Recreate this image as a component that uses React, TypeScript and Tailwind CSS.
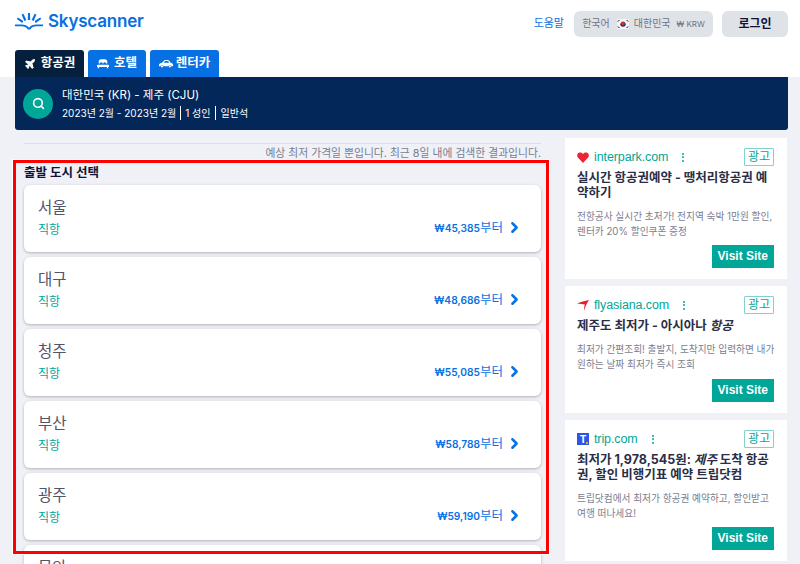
import { ChevronRight, Plane, Search } from "lucide-react";

const font = { fontFamily: '"Inter", "Noto Sans CJK KR", sans-serif' };
const latin = { fontFamily: '"Liberation Sans", "Noto Sans CJK KR", sans-serif' };

/////////////////////////////////////////////////////////////////
// data
const cities = [
  { name: "서울", price: "₩45,385" },
  { name: "대구", price: "₩48,686" },
  { name: "청주", price: "₩55,085" },
  { name: "부산", price: "₩58,788" },
  { name: "광주", price: "₩59,190" },
  { name: "무안", price: "₩61,200" },
];

function Logo() {
  return (
    <svg width="28" height="18" viewBox="0 0 28 18" className="shrink-0">
      <g fill="#0770e3">
        <path d="M13 0h2l.2 7h-2.400z" />
        <path d="M6.600 1.600L8.400.800l3 6.200-2.100 1z" />
        <path d="M21.400 1.600L19.600.800l-3 6.200 2.100 1z" />
        <path d="M1.800 6l1-1.600 5.600 3.700-1.200 1.800z" />
        <path d="M26.200 6l-1-1.600-5.600 3.700 1.200 1.800z" />
        <path d="M0 11.600h6.400c3.300 0 5.900 1 7.600 3.100 1.700-2.100 4.300-3.100 7.600-3.100H28v1.700h-6.200c-3.200 0-5.400 1.200-6.600 3.200h-2.400c-1.200-2-3.400-3.200-6.600-3.200H0z" />
      </g>
    </svg>
  );
}

function Flag() {
  return (
    <svg width="12" height="10" viewBox="0 0 12 10" className="shrink-0">
      <rect width="12" height="10" fill="#f5f5f5" />
      <circle cx="6" cy="5" r="2.600" fill="#cd2e3a" />
      <path d="M3.400 5a2.600 2.600 0 0 0 5.200 0c0-.9-1.300-1.200-1.300 0a1.300 1.300 0 0 1-2.600 0z" fill="#0047a0" />
      <g stroke="#111" strokeWidth="1">
        <path d="M.8 2.600l1.600-1.600M9.600 1l1.600 1.600M.8 7.400L2.400 9M9.600 9l1.600-1.600" />
      </g>
    </svg>
  );
}

function BedIcon() {
  return (
    <svg width="12" height="10" viewBox="0 0 14 11" className="shrink-0">
      <path d="M2 5V3a3 3 0 0 1 3-3h4a3 3 0 0 1 3 3v2h-1.500a1.500 1.500 0 0 0-1.500-1.500H9A1.500 1.500 0 0 0 7.500 5h-1A1.500 1.500 0 0 0 5 3.500H5A1.500 1.500 0 0 0 3.500 5z" fill="white" />
      <path d="M1 6.300h12a1 1 0 0 1 1 1V9h-1v1.500h-1.500V9h-9v1.500H1V9H0V7.300a1 1 0 0 1 1-1z" fill="white" />
    </svg>
  );
}

function CarIcon() {
  return (
    <svg width="14" height="9" viewBox="0 0 16 10" className="shrink-0">
      <path d="M0 6c0-1 2-1.700 3.500-2L5.800 1.600C6.300 1.100 6.900 1 7.600 1h2.300c.8 0 1.400.3 1.900 1l1.500 2c1.500.3 2.700 1 2.700 2.200V8h-1.700a1.900 1.900 0 0 0-3.600 0H5.300a1.900 1.900 0 0 0-3.600 0H0z" fill="white" />
      <circle cx="3.500" cy="8.200" r="1.300" fill="white" />
      <circle cx="12.500" cy="8.200" r="1.300" fill="white" />
      <path d="M5.500 4l1.300-1.500c.2-.2.500-.3.800-.3h2.200c.4 0 .7.200.9.500L11.500 4z" fill="#0770e3" />
    </svg>
  );
}

function AdLogo({ kind }: { kind: string }) {
  if (kind === "heart") {
    return (
      <svg width="12" height="11" viewBox="0 0 12 11" className="shrink-0">
        <path d="M6 11L.9 5.600C-.6 3.900.1.800 2.800.500 4.300.300 5.300 1 6 2.100 6.700 1 7.700.300 9.200.500c2.700.300 3.400 3.400 1.900 5.100z" fill="#ee2436" />
      </svg>
    );
  }
  if (kind === "wing") {
    return (
      <svg width="12" height="11" viewBox="0 0 12 11" className="shrink-0">
        <path d="M0 3.600C3.600 2 7.600.900 12 0 10.200 2.600 8.200 6.400 7 11 6.900 8.600 7.200 6.400 7.800 4.400 5.400 4.200 2.800 4 0 3.600z" fill="#e4202c" />
      </svg>
    );
  }
  return (
    <div className="relative flex h-3 w-3 shrink-0 items-center justify-center bg-[#2f54eb] text-[10px] leading-none font-bold text-white">
      T
      <span className="absolute right-[1px] bottom-[1px] h-[2px] w-[2px] bg-[#ffa500]" />
    </div>
  );
}

function Kebab() {
  return (
    <div className="flex flex-col gap-[1.5px]">
      <span className="h-[2px] w-[2px] rounded-full bg-[#00a698]" />
      <span className="h-[2px] w-[2px] rounded-full bg-[#00a698]" />
      <span className="h-[2px] w-[2px] rounded-full bg-[#00a698]" />
    </div>
  );
}

function AdCard({
  logo,
  site,
  children,
  desc,
  className,
}: {
  logo: string;
  site: string;
  children: React.ReactNode;
  desc: string;
  className: string;
}) {
  return (
    <div className={`flex w-[222px] flex-col bg-white pt-[10px] pr-[13px] pb-[11px] pl-[12px] ${className}`}>
      <div className="flex h-[18px] items-center">
        <AdLogo kind={logo} />
        <span className="ml-[5px] text-[12.5px] tracking-[-0.1px] text-[#00a698]" style={latin}>
          {site}
        </span>
        <div className="ml-[14px]">
          <Kebab />
        </div>
        <span className="ml-auto flex h-[18px] w-[30px] items-center justify-center rounded-[1px] border border-[#80d2cb] text-[12px] leading-none text-[#00a698]">
          광고
        </span>
      </div>
      <div className="mt-[4px] text-[12.5px] leading-[15px] font-bold break-all text-[#2a2d45]">{children}</div>
      <p className="mt-[9px] -mr-[4px] text-[9.7px] leading-[15px] break-keep text-[#7b7d8f]">{desc}</p>
      <button className="mt-auto self-end bg-[#00a698] px-[6px] text-[12px] leading-[23px] font-bold text-white" style={latin}>
        Visit Site
      </button>
    </div>
  );
}

export default function App() {
  return (
    <div className="relative h-[564px] w-[800px] overflow-hidden bg-[#eff1f7]" style={font}>
      {/* top bar */}
      <div className="bg-white">
        <header className="flex h-[50px] justify-between pt-[10px] pr-[12px] pl-[15px]">
          <div className="flex h-[24px] items-center gap-[5px]">
            <Logo />
            <span className="text-[17px] font-semibold tracking-[-0.2px] text-[#0770e3]">Skyscanner</span>
          </div>
          <div className="flex h-[27px] items-center">
            <span className="text-[11px] text-[#0770e3]">도움말</span>
            <div className="ml-[10px] flex h-[26px] w-[139px] items-center justify-center rounded-md bg-[#dfe2e7] text-[10px] text-[#6f7282]">
              한국어
              <span className="mr-[5px] ml-[7px]">
                <Flag />
              </span>
              대한민국
              <span className="ml-[6px] text-[8px]">₩ KRW</span>
            </div>
            <button className="ml-[9px] h-[26px] w-[66px] rounded-md bg-[#dfe2e7] text-[12px] font-bold text-[#111236]">로그인</button>
          </div>
        </header>

        {/* tabs */}
        <nav className="flex h-[27px] gap-1 pl-[15px]">
          <div className="flex w-[69px] items-center justify-center gap-[5px] rounded-t-[3px] bg-[#05203c] text-[12.5px] font-bold text-white">
            <Plane size={12} fill="white" />
            항공권
          </div>
          <div className="flex w-[58px] items-center justify-center gap-[5px] rounded-t-[3px] bg-[#0770e3] text-[12.5px] font-bold text-white">
            <BedIcon />
            호텔
          </div>
          <div className="flex w-[69px] items-center justify-center gap-[3px] rounded-t-[3px] bg-[#0770e3] text-[12.5px] font-bold text-white">
            <CarIcon />
            렌터카
          </div>
        </nav>
      </div>

      {/* search summary */}
      <div className="mr-[12px] ml-[15px] flex h-[53px] items-center rounded-b-[3px] bg-[#042759] pl-[8px] text-white">
        <div className="flex h-[30px] w-[30px] items-center justify-center rounded-full bg-[#00a698]">
          <Search size={13} strokeWidth={3} />
        </div>
        <div className="ml-[9px]">
          <div className="text-[11.5px] leading-[17px]">대한민국 (KR) - 제주 (CJU)</div>
          <div className="mt-[2px] flex items-center text-[10px] leading-[14px]">
            <span className="border-r border-white pr-[4px]">2023년 2월 - 2023년 2월</span>
            <span className="border-r border-white px-[4px]">1 성인</span>
            <span className="pl-[5px]">일반석</span>
          </div>
        </div>
      </div>

      <main className="flex items-start pl-[24px]">
        {/* departure cities */}
        <section className="w-[517px] shrink-0 pt-[13px]">
          <div className="border-t border-[#dcdee6] pt-[2px] text-right text-[10.8px] leading-[15px] text-[#7b7d8f]">
            예상 최저 가격일 뿐입니다. 최근 8일 내에 검색한 결과입니다.
          </div>
          <h2 className="mt-[3px] text-[12.5px] leading-[18px] font-bold text-[#111236]">출발 도시 선택</h2>
          <div className="mt-[3px] flex flex-col gap-[5px]">
            {cities.map((c) => (
              <div key={c.name} className="h-[67px] shrink-0 rounded-md bg-white pt-[11px] pr-[18px] pl-[14px] shadow-[0_1px_3px_rgba(37,32,31,0.3)]">
                <div className="text-[15.5px] leading-[24px] text-[#52546a]">{c.name}</div>
                <div className="flex items-center justify-between">
                  <span className="text-[12px] leading-[19px] text-[#00a698]">직항</span>
                  <span className="-mt-[2px] flex items-center text-[#0770e3]">
                    <span className="text-[10.2px] font-semibold">{c.price}</span>
                    <span className="text-[12.5px]">부터</span>
                    <ChevronRight size={17} strokeWidth={3.5} className="-mt-[2px] ml-[3px]" />
                  </span>
                </div>
              </div>
            ))}
          </div>
        </section>

        {/* ads */}
        <aside className="ml-[24px] flex w-[222px] shrink-0 flex-col gap-[7px] pt-[8px]">
          <AdCard logo="heart" site="interpark.com" desc="전항공사 실시간 초저가! 전지역 숙박 1만원 할인, 렌터카 20% 할인쿠폰 증정" className="h-[141px]">
            실시간 항공권예약 - 땡처리항공권 예약하기
          </AdCard>
          <AdCard logo="wing" site="flyasiana.com" desc="최저가 간편조회! 출발지, 도착지만 입력하면 내가 원하는 날짜 최저가 즉시 조회" className="h-[127px]">
            제주도 최저가 - 아시아나 <i>항공</i>
          </AdCard>
          <AdCard logo="trip" site="trip.com" desc="트립닷컴에서 최저가 항공권 예약하고, 할인받고 여행 떠나세요!" className="h-[141px]">
            최저가 1,978,545원: <i>제주</i> 도착 항공권, 할인 비행기표 예약 트립닷컴
          </AdCard>
        </aside>
      </main>

      {/* red annotation */}
      <div className="pointer-events-none absolute top-[160px] left-[13px] h-[394px] w-[536px] border-[3px] border-[#ff0000] outline outline-white" />
    </div>
  );
}
